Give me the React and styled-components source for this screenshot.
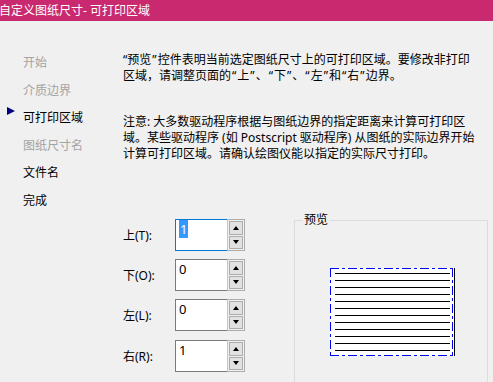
import React from "react";
import styled, { createGlobalStyle } from "styled-components";

const Global = createGlobalStyle`
  html, body { margin: 0; padding: 0; background: #f0f0f0; }
  body { font-family: "Noto Sans", "Noto Sans CJK SC", sans-serif; font-size: 12px; color: #000; overflow: hidden; }
`;

const Window = styled.div`
  width: 493px;
  height: 382px;
  background: #f0f0f0;
  display: flex;
  flex-direction: column;
  overflow: hidden;
`;

const TitleBar = styled.div`
  height: 23px;
  background: #c9296f;
  color: #fff;
  font-size: 12px;
  line-height: 21px;
  margin-left: -1px;
  white-space: nowrap;
`;

const Body = styled.div`
  display: flex;
  flex: 1;
`;

const Nav = styled.ul`
  list-style: none;
  margin: 0;
  padding: 28px 0 0 0;
  width: 123px;
  flex-shrink: 0;
`;

const NavItem = styled.li`
  position: relative;
  height: 27.6px;
  line-height: 27.6px;
  padding-left: 23px;
  font-size: 12px;
  color: ${(p) => (p.$disabled ? "#a3a3a3" : "#000")};
`;

const Arrow = styled.span`
  position: absolute;
  left: 7px;
  top: 3px;
  width: 0;
  height: 0;
  border-top: 4px solid transparent;
  border-bottom: 4px solid transparent;
  border-left: 8px solid #000080;
`;

const Main = styled.div`
  flex: 1;
  padding-top: 31px;
  display: flex;
  flex-direction: column;
`;

const Para = styled.p`
  margin: 0 0 ${(p) => p.$gap || 0}px 0;
  line-height: 16px;
  font-size: 12px;
  white-space: nowrap;
`;

const Line = styled.span`
  display: block;
`;

const Quote = styled.span`
  padding: 0 1px;
`;

const Lower = styled.div`
  display: flex;
  margin-top: 57px;
`;

const Form = styled.div`
  display: flex;
  flex-direction: column;
  gap: 8px;
  width: 122px;
  flex-shrink: 0;
`;

const Row = styled.div`
  display: flex;
  align-items: center;
  height: 32px;
  margin-top: ${(p) => p.$extra || 0}px;
`;

const Label = styled.span`
  width: 52px;
  font-size: 12px;
`;

const Spin = styled.div`
  display: flex;
  width: 70px;
  height: 32px;
`;

const Field = styled.div`
  width: 52px;
  height: 32px;
  box-sizing: border-box;
  background: #fff;
  border: 1px solid ${(p) => (p.$focus ? "#0078d7" : "#7a7a7a")};
  border-right: none;
  padding: 2px 0 0 3px;
  font-size: 13px;
  line-height: 15px;
`;

const Selected = styled.span`
  background: #3399ff;
  color: #fff;
  padding: 0 1px;
`;

const Buttons = styled.div`
  width: 18px;
  height: 32px;
  box-sizing: border-box;
  border: 1px solid #adadad;
  border-left: 1px solid #c4c4c4;
  background: #f0f0f0;
  display: flex;
  flex-direction: column;
  gap: 1px;
  padding: 1px;
`;

const SpinButton = styled.div`
  flex: 1;
  background: #e1e1e1;
  border: 1px solid #adadad;
  display: flex;
  align-items: center;
  justify-content: center;
`;

const Tri = styled.span`
  width: 0;
  height: 0;
  border-left: 3.5px solid transparent;
  border-right: 3.5px solid transparent;
  ${(p) =>
    p.$down
      ? "border-top: 4px solid #000;"
      : "border-bottom: 4px solid #000;"}
`;

const Group = styled.fieldset`
  margin: -6px 0 0 49px;
  padding: 0 0 0 7px;
  width: 194px;
  height: 220px;
  box-sizing: border-box;
  border: 1px solid #dcdcdc;
  min-width: 0;
`;

const Legend = styled.legend`
  padding: 0 2px;
  font-size: 12px;
  line-height: 14px;
`;

const PreviewWrap = styled.div`
  display: flex;
  padding-left: 28px;
  margin-top: 41px;
`;

const SpinBox = ({ value, focus }) => (
  <Spin>
    <Field $focus={focus}>{focus ? <Selected>{value}</Selected> : value}</Field>
    <Buttons>
      <SpinButton>
        <Tri />
      </SpinButton>
      <SpinButton>
        <Tri $down />
      </SpinButton>
    </Buttons>
  </Spin>
);

const PagePreview = () => {
  const lines = [];
  for (let i = 0; i < 12; i++) {
    const y = 5.5 + i * 7;
    lines.push(<line key={i} x1="5" x2="120" y1={y} y2={y} stroke="#000" strokeWidth="1" />);
  }
  const dash = "9,3,3,3";
  return (
    <svg width="126" height="89" viewBox="0 0 126 89">
      <rect x="0" y="0" width="125" height="88" fill="#fff" />
      {lines}
      <line x1="0" y1="0.5" x2="124" y2="0.5" stroke="#0000ff" strokeDasharray={dash} />
      <line x1="0.5" y1="0" x2="0.5" y2="88" stroke="#0000ff" strokeDasharray={dash} />
      <line x1="122.5" y1="0" x2="122.5" y2="88" stroke="#0000ff" strokeDasharray={dash} />
      <line x1="0" y1="87.5" x2="124" y2="87.5" stroke="#0000ff" strokeDasharray={dash} />
      <line x1="124.5" y1="0" x2="124.5" y2="88" stroke="#000" />
    </svg>
  );
};

const Q = ({ children }) => <Quote>{children}</Quote>;

export default function App() {
  return (
    <Window>
      <Global />
      <TitleBar>自定义图纸尺寸- 可打印区域</TitleBar>
      <Body>
        <Nav>
          <NavItem $disabled>开始</NavItem>
          <NavItem $disabled>介质边界</NavItem>
          <NavItem>
            <Arrow />
            可打印区域
          </NavItem>
          <NavItem $disabled>图纸尺寸名</NavItem>
          <NavItem>文件名</NavItem>
          <NavItem>完成</NavItem>
        </Nav>
        <Main>
          <Para $gap={30}>
            <Line>“预览<Q>”</Q>控件表明当前选定图纸尺寸上的可打印区域。要修改非打印</Line>
            <Line>区域，请调整页面的<Q>“</Q>上<Q>”</Q>、<Q>“</Q>下<Q>”</Q>、<Q>“</Q>左<Q>”</Q>和<Q>“</Q>右<Q>”</Q>边界。</Line>
          </Para>
          <Para>
            <Line>注意: 大多数驱动程序根据与图纸边界的指定距离来计算可打印区</Line>
            <Line>域。某些驱动程序 (如 Postscript 驱动程序) 从图纸的实际边界开始</Line>
            <Line>计算可打印区域。请确认绘图仪能以指定的实际尺寸打印。</Line>
          </Para>
          <Lower>
            <Form>
              <Row>
                <Label>上(T):</Label>
                <SpinBox value="1" focus />
              </Row>
              <Row>
                <Label>下(O):</Label>
                <SpinBox value="0" />
              </Row>
              <Row>
                <Label>左(L):</Label>
                <SpinBox value="0" />
              </Row>
              <Row $extra={1}>
                <Label>右(R):</Label>
                <SpinBox value="1" />
              </Row>
            </Form>
            <Group>
              <Legend>预览</Legend>
              <PreviewWrap>
                <PagePreview />
              </PreviewWrap>
            </Group>
          </Lower>
        </Main>
      </Body>
    </Window>
  );
}
